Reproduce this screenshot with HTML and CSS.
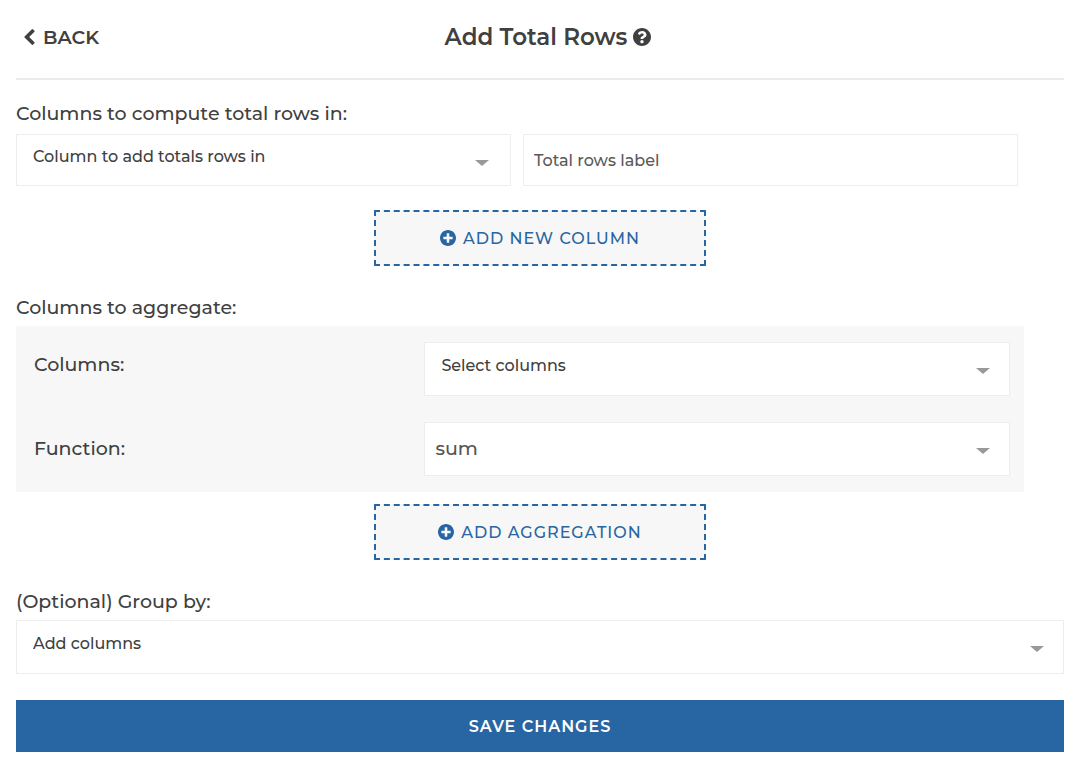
FILE: index.html
```html
<!DOCTYPE html>
<html lang="en">
<head>
<meta charset="utf-8">
<meta name="viewport" content="width=device-width, initial-scale=1">
<title>Add Total Rows</title>
<link rel="stylesheet" href="styles.css">
</head>
<body>
<form class="page">
  <header class="header">
    <button type="button" class="back">
      <svg class="back-icon" viewBox="154 26 1036 1612" aria-hidden="true"><path d="M1171 301L640 832l531 531q19 19 19 45t-19 45l-166 166q-19 19-45 19t-45-19L173 877q-19-19-19-45t19-45L915 45q19-19 45-19t45 19l166 166q19 19 19 45t-19 45z"/></svg>
      <span>BACK</span>
    </button>
    <h1 class="title">
      <span>Add Total Rows</span>
      <svg class="help-icon" viewBox="8 8 496 496" role="img" aria-label="Help"><path d="M504 256c0 136.997-111.043 248-248 248S8 392.997 8 256C8 119.083 119.043 8 256 8s248 111.083 248 248zM262.655 90c-54.497 0-89.255 22.957-116.549 63.758-3.536 5.286-2.353 12.415 2.715 16.258l34.699 26.310c5.205 3.947 12.621 3.008 16.665-2.122 17.864-22.658 30.113-35.797 57.303-35.797 20.429 0 45.698 13.148 45.698 32.958 0 14.976-12.363 22.667-32.534 33.976C247.128 238.528 216 254.941 216 296v4c0 6.627 5.373 12 12 12h56c6.627 0 12-5.373 12-12v-1.333c0-28.462 83.186-29.647 83.186-106.667 0-58.002-60.165-102-116.531-102zM256 338c-25.365 0-46 20.635-46 46 0 25.364 20.635 46 46 46s46-20.636 46-46c0-25.364-20.635-46-46-46z"/></svg>
    </h1>
  </header>

  <section class="section">
    <label class="label first-label" for="total-column">Columns to compute total rows in:</label>
    <div class="total-row">
      <div class="select">
        <select class="control placeholder" id="total-column"><option>Column to add totals rows in</option></select>
      </div>
      <input class="control text-input" type="text" placeholder="Total rows label" aria-label="Total rows label">
    </div>
    <button type="button" class="add add-column">
      <svg class="add-icon" viewBox="8 8 496 496" aria-hidden="true"><path d="M256 8C119 8 8 119 8 256s111 248 248 248 248-111 248-248S393 8 256 8zm144 276c0 6.600-5.400 12-12 12h-92v92c0 6.600-5.400 12-12 12h-56c-6.600 0-12-5.400-12-12v-92h-92c-6.600 0-12-5.400-12-12v-56c0-6.600 5.400-12 12-12h92v-92c0-6.600 5.400-12 12-12h56c6.600 0 12 5.400 12 12v92h92c6.600 0 12 5.400 12 12v56z"/></svg>
      <span>ADD NEW COLUMN</span>
    </button>
  </section>

  <section class="section">
    <h2 class="label">Columns to aggregate:</h2>
    <div class="panel">
      <div class="field">
        <label for="agg-columns">Columns:</label>
        <div class="select">
          <select class="control tall placeholder" id="agg-columns"><option>Select columns</option></select>
        </div>
      </div>
      <div class="field">
        <label for="agg-function">Function:</label>
        <div class="select">
          <select class="control tall function" id="agg-function"><option>sum</option></select>
        </div>
      </div>
    </div>
    <button type="button" class="add">
      <svg class="add-icon" viewBox="8 8 496 496" aria-hidden="true"><path d="M256 8C119 8 8 119 8 256s111 248 248 248 248-111 248-248S393 8 256 8zm144 276c0 6.600-5.400 12-12 12h-92v92c0 6.600-5.400 12-12 12h-56c-6.600 0-12-5.400-12-12v-92h-92c-6.600 0-12-5.400-12-12v-56c0-6.600 5.400-12 12-12h92v-92c0-6.600 5.400-12 12-12h56c6.600 0 12 5.400 12 12v92h92c6.600 0 12 5.400 12 12v56z"/></svg>
      <span>ADD AGGREGATION</span>
    </button>
  </section>

  <section class="section">
    <label class="label" for="group-by">(Optional) Group by:</label>
    <div class="select">
      <select class="control tall placeholder" id="group-by"><option>Add columns</option></select>
    </div>
  </section>

  <button type="submit" class="save">SAVE CHANGES</button>
</form>
</body>
</html>
```
FILE: styles.css
```css
* {
  box-sizing: border-box;
}

body {
  margin: 0;
  background: #fff;
  color: #404040;
  font-family: Montserrat, Inter, sans-serif;
  font-size: 19px;
  font-weight: 500;
  line-height: 24px;
}

button,
input,
select {
  font-family: inherit;
  font-weight: 500;
  color: inherit;
}

svg {
  fill: currentColor;
  flex: none;
}

.page {
  padding: 0 10px 14px 16px;
}

.header {
  display: grid;
  grid-template-columns: 1fr auto 1fr;
  align-items: center;
  height: 80px;
  padding-bottom: 4px;
  border-bottom: 2px solid #ebebeb;
}

.back {
  display: flex;
  align-items: center;
  justify-self: start;
  gap: 8px;
  padding: 0 8px;
  border: 0;
  background: none;
  font-size: 19px;
  font-weight: 600;
}

.back-icon {
  width: 11px;
  height: 16px;
}

.title {
  display: flex;
  align-items: center;
  gap: 6px;
  margin: 0;
  padding-left: 16px;
  font-size: 23px;
  font-weight: 600;
}

.help-icon {
  width: 18px;
  height: 18px;
}

.section {
  display: flex;
  flex-direction: column;
  padding-top: 30px;
}

.header + .section {
  padding-top: 22px;
}

.label {
  margin: 0 0 6px;
  font-size: inherit;
  font-weight: inherit;
}

.first-label {
  margin-bottom: 8px;
}

.total-row {
  display: grid;
  grid-template-columns: 1fr 1fr;
  gap: 12px;
  padding-right: 46px;
}

.select {
  position: relative;
  display: grid;
}

.select::after {
  content: "";
  position: absolute;
  top: 26px;
  right: 20px;
  border: 7px solid transparent;
  border-top: 6px solid #999;
  border-bottom: 0;
  pointer-events: none;
}

.total-row .select::after {
  right: 22px;
}

.control {
  width: 100%;
  height: 52px;
  border: 1px solid #eee;
  border-radius: 0;
  background: #fff;
  font-size: 16px;
  appearance: none;
}

.tall {
  height: 54px;
}

.placeholder {
  padding: 0 40px 8px 16px;
}

.function {
  padding: 0 40px 2px 10px;
  color: #555;
  font-size: 19px;
}

.text-input {
  padding: 0 10px;
}

.text-input::placeholder {
  color: #595959;
  opacity: 1;
}

.panel {
  display: grid;
  gap: 26px;
  margin: 0 40px 12px 0;
  padding: 16px 14px 16px 18px;
  background: #f7f7f7;
}

.field {
  display: grid;
  grid-template-columns: 2fr 3fr;
  align-items: baseline;
}

.add {
  display: flex;
  align-items: center;
  justify-content: center;
  align-self: center;
  gap: 7px;
  width: 332px;
  height: 56px;
  padding: 0;
  border: 2px dashed #2765a3;
  background: #f7f7f7;
  color: #2765a3;
  font-size: 16px;
  letter-spacing: 1px;
}

.add-column {
  margin-top: 24px;
}

.add-icon {
  width: 16px;
  height: 16px;
}

.save {
  display: block;
  width: 100%;
  height: 52px;
  margin-top: 26px;
  border: 0;
  background: #2765a3;
  color: #fff;
  font-size: 16px;
  font-weight: 600;
  letter-spacing: 1px;
}
```
